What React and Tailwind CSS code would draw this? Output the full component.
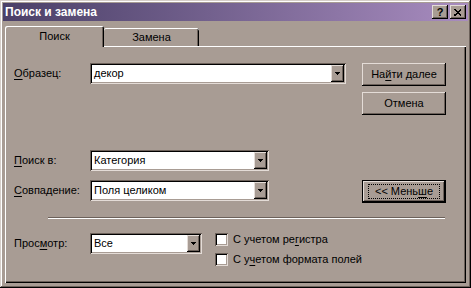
import React from 'react';

const raised = "shadow-[inset_-1px_-1px_0_#000,inset_1px_1px_0_#e4dcd7,inset_-2px_-2px_0_#6c615a]";
const sunken = "shadow-[inset_1px_1px_0_#6c615a,inset_-1px_-1px_0_#e4dcd7,inset_2px_2px_0_#000,inset_-2px_-2px_0_#a89c94]";

const Combo = ({ w, value }) => (
    <div className={`flex h-[21px] ${w} bg-white p-[2px] ${sunken}`}>
        <div className="flex-1 pl-[2px] leading-[17px] text-black">{value}</div>
        <div className={`flex w-[13px] items-center justify-center bg-[#a89c94] ${raised}`}>
            <svg width="5" height="3" shapeRendering="crispEdges">
                <polygon points="0,0 5,0 2.5,3" fill="#000" />
            </svg>
        </div>
    </div>
);

const Button = ({ children, focused }) => (
    <div className={`h-[23px] w-[84px] ${focused ? 'border border-black' : ''}`}>
        <div className={`flex h-full w-full items-center justify-center bg-[#a89c94] ${raised}`}>
            {focused ? (
                <span className="flex h-[15px] w-[72px] items-center justify-center border border-dotted border-black">{children}</span>
            ) : children}
        </div>
    </div>
);

const Check = ({ children }) => (
    <div className="flex h-[13px] items-center gap-[5px]">
        <div className={`h-[13px] w-[13px] bg-white ${sunken}`}></div>
        <span>{children}</span>
    </div>
);

const U = ({ children }) => <span className="underline decoration-1 underline-offset-[2px]">{children}</span>;

export default function App() {
    return (
        <div className="h-[288px] w-[471px] bg-[#a89c94] p-[3px] font-['Liberation_Sans',Arial,sans-serif] text-[11px] text-black shadow-[inset_-1px_-1px_0_#000,inset_1px_1px_0_#d6cec9,inset_-2px_-2px_0_#6c615a,inset_2px_2px_0_#fff] overflow-hidden">
            {/* Title bar */}
            <div className="flex h-[18px] items-center justify-between bg-gradient-to-r from-[#4b4068] to-[#a88cbf] pl-[2px] pr-[2px]">
                <span className="text-[12px] font-bold text-white">Поиск и замена</span>
                <div className="flex gap-[2px]">
                    <div className={`flex h-[14px] w-[16px] items-center justify-center bg-[#a89c94] text-[11px] font-bold leading-none ${raised}`}>?</div>
                    <div className={`flex h-[14px] w-[16px] items-center justify-center bg-[#a89c94] ${raised}`}>
                        <svg width="8" height="7" shapeRendering="crispEdges">
                            <path d="M0.5 0.5L7.5 6.5M7.5 0.5L0.5 6.5" stroke="#000" strokeWidth="1.5" />
                        </svg>
                    </div>
                </div>
            </div>

            {/* Tabs */}
            <div className="ml-[2px] mt-[5px] flex h-[20px] items-end">
                <div className="relative z-10 -mb-[1px] flex h-[21px] w-[99px] items-center justify-center rounded-t-[2px] bg-[#a89c94] pb-[1px] shadow-[inset_1px_1px_0_#fff,inset_-1px_0_0_#000,inset_-2px_0_0_#6c615a]">
                    Поиск
                </div>
                <div className="flex h-[18px] w-[95px] items-center justify-center rounded-t-[2px] bg-[#a89c94] shadow-[inset_0_1px_0_#fff,inset_-1px_0_0_#000,inset_-2px_0_0_#6c615a]">
                    Замена
                </div>
            </div>

            {/* Panel */}
            <div className="ml-[2px] h-[237px] w-[461px] pl-[9px] pt-[17px] shadow-[inset_1px_1px_0_#fff,inset_-1px_-1px_0_#000,inset_-2px_-2px_0_#6c615a]">
                <div className="flex items-start">
                    <div className="w-[76px] leading-[21px]"><U>О</U>бразец:</div>
                    <Combo w="w-[256px]" value="декор" />
                    <div className="ml-[16px] flex flex-col gap-[6px]">
                        <Button>На<U>й</U>ти далее</Button>
                        <Button>Отмена</Button>
                    </div>
                </div>

                <div className="mt-[35px] flex items-start">
                    <div className="w-[76px] leading-[21px]"><U>П</U>оиск в:</div>
                    <Combo w="w-[179px]" value="Категория" />
                </div>

                <div className="mt-[9px] flex items-start">
                    <div className="w-[76px] leading-[21px]"><U>С</U>овпадение:</div>
                    <Combo w="w-[179px]" value="Поля целиком" />
                    <div className="ml-[93px]">
                        <Button focused>&lt;&lt; Мень<U>ш</U>е</Button>
                    </div>
                </div>

                <div className="ml-[34px] mt-[14px] h-[2px] w-[397px] border-t border-b border-t-[#6c615a] border-b-[#fff]"></div>

                <div className="mt-[14px] flex items-start">
                    <div className="w-[76px] leading-[21px]">Прос<U>м</U>отр:</div>
                    <Combo w="w-[112px]" value="Все" />
                    <div className="ml-[13px] flex flex-col gap-[7px]">
                        <Check>С учетом ре<U>г</U>истра</Check>
                        <Check>С у<U>ч</U>етом формата полей</Check>
                    </div>
                </div>
            </div>
        </div>
    );
}
